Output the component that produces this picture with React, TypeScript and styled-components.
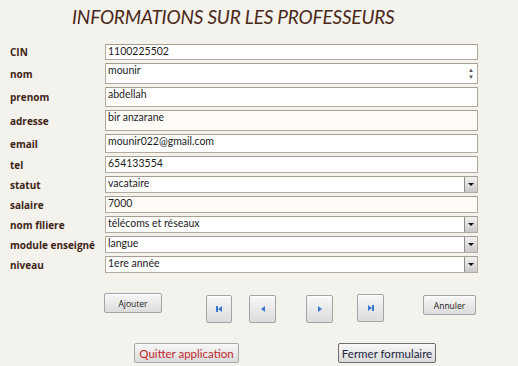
import { Fragment } from "react";
import styled, { createGlobalStyle } from "styled-components";

const GlobalStyle = createGlobalStyle`
  html, body {
    margin: 0;
    padding: 0;
    background: #f4f2ec;
  }
`;

const Page = styled.div`
  width: 518px;
  height: 366px;
  background: #f4f2ec;
  font-family: "Lato", "Open Sans", sans-serif;
  overflow: hidden;
`;

const Title = styled.h1`
  margin: 0;
  padding: 5px 0 0 72px;
  height: 40px;
  box-sizing: border-box;
  font-family: "Lato", sans-serif;
  font-style: italic;
  font-weight: 400;
  font-size: 19px;
  letter-spacing: -0.2px;
  color: #4a2818;
`;

const Form = styled.div`
  display: grid;
  grid-template-columns: 95px 373px;
  row-gap: 3px;
  padding: 4px 0 0 10px;
`;

const Label = styled.div`
  display: flex;
  align-items: center;
  font-family: "Open Sans", sans-serif;
  font-weight: 700;
  font-size: 10px;
  color: #3e2416;
`;

const Field = styled.div<{ $h: number; $tint?: boolean }>`
  position: relative;
  height: ${(p) => p.$h}px;
  box-sizing: border-box;
  border: 1px solid #b3aa9c;
  border-top-color: #a79d8e;
  background: ${(p) => (p.$tint ? "#fffcf8" : "#ffffff")};
  font-family: "Lato", sans-serif;
  font-size: 10.5px;
  color: #1c1c1c;
  padding: 0 0 0 2px;
  line-height: 13px;
`;

const DropButton = styled.div`
  position: absolute;
  right: 0;
  top: 0;
  bottom: 0;
  width: 12px;
  border-left: 1px solid #8e8e8e;
  background: linear-gradient(#f2f2f2, #c9c9c9);
  display: flex;
  align-items: center;
  justify-content: center;

  &::after {
    content: "";
    border-left: 3px solid transparent;
    border-right: 3px solid transparent;
    border-top: 3px solid #111;
  }
`;

const Spinner = styled.div`
  position: absolute;
  right: 2px;
  top: 2px;
  bottom: 2px;
  width: 8px;
  display: flex;
  flex-direction: column;
  justify-content: space-around;
  align-items: center;
  font-size: 6px;
  line-height: 6px;
  color: #555;
`;

const ButtonRow = styled.div`
  display: flex;
  align-items: flex-start;
  padding: 20px 0 0 104px;
  height: 50px;
  box-sizing: border-box;
`;

const Push = styled.button<{ $w: number; $h: number; $ml: number; $mt?: number }>`
  width: ${(p) => p.$w}px;
  height: ${(p) => p.$h}px;
  margin: ${(p) => p.$mt ?? 0}px 0 0 ${(p) => p.$ml}px;
  padding: 0;
  border: 1px solid #a4a4a4;
  border-radius: 2px;
  background: linear-gradient(#f7f7f7, #dcdcdc);
  box-shadow: inset 0 1px 0 #ffffff;
  font-family: "Open Sans", sans-serif;
  font-size: 8.5px;
  color: #222;
  display: flex;
  align-items: center;
  justify-content: center;
`;

const BottomRow = styled.div`
  display: flex;
  padding: 20px 0 0 134px;
`;

const BigButton = styled.button<{ $w: number; $ml: number; $color: string; $dark?: boolean }>`
  width: ${(p) => p.$w}px;
  height: 20px;
  margin-left: ${(p) => p.$ml}px;
  padding: 0;
  border: 1px solid ${(p) => (p.$dark ? "#6d6d6d" : "#a8a8a8")};
  border-radius: 2px;
  background: linear-gradient(#f8f8f8, #dadada);
  font-family: "Lato", sans-serif;
  font-size: 11.5px;
  color: ${(p) => p.$color};
`;

const NavIcon = ({ kind }: { kind: "first" | "prev" | "next" | "last" }) => (
  <svg width="10" height="10" viewBox="0 0 10 10">
    {kind === "first" && (
      <>
        <rect x="2" y="2" width="2" height="6" fill="#3a78d0" />
        <path d="M8 2 L4 5 L8 8 Z" fill="#3a78d0" />
      </>
    )}
    {kind === "prev" && <path d="M7 2 L3 5 L7 8 Z" fill="#3a78d0" />}
    {kind === "next" && <path d="M3 2 L7 5 L3 8 Z" fill="#3a78d0" />}
    {kind === "last" && (
      <>
        <path d="M2 2 L6 5 L2 8 Z" fill="#3a78d0" />
        <rect x="6" y="2" width="2" height="6" fill="#3a78d0" />
      </>
    )}
  </svg>
);

type Row = { label: string; value: string; h: number; kind?: "drop" | "spin"; tint?: boolean };

const rows: Row[] = [
  { label: "CIN", value: "1100225502", h: 16 },
  { label: "nom", value: "mounir", h: 21, kind: "spin" },
  { label: "prenom", value: "abdellah", h: 20 },
  { label: "adresse", value: "bir anzarane", h: 21, tint: true },
  { label: "email", value: "mounir022@gmail.com", h: 19 },
  { label: "tel", value: "654133554", h: 17 },
  { label: "statut", value: "vacataire", h: 17, kind: "drop" },
  { label: "salaire", value: "7000", h: 17, tint: true },
  { label: "nom filiere", value: "télécoms et réseaux", h: 17, kind: "drop" },
  { label: "module enseigné", value: "langue", h: 17, kind: "drop" },
  { label: "niveau", value: "1ere année", h: 17, kind: "drop" },
];

export default function App() {
  return (
    <Page>
      <GlobalStyle />
      <Title>INFORMATIONS SUR LES PROFESSEURS</Title>
      <Form>
        {rows.map((r) => (
          <Fragment key={r.label}>
            <Label>{r.label}</Label>
            <Field $h={r.h} $tint={r.tint}>
              {r.value}
              {r.kind === "drop" && <DropButton />}
              {r.kind === "spin" && (
                <Spinner>
                  <span>▲</span>
                  <span>▼</span>
                </Spinner>
              )}
            </Field>
          </Fragment>
        ))}
      </Form>
      <ButtonRow>
        <Push $w={58} $h={20} $ml={0}>Ajouter</Push>
        <Push $w={26} $h={28} $ml={44} $mt={2}><NavIcon kind="first" /></Push>
        <Push $w={27} $h={28} $ml={17} $mt={2}><NavIcon kind="prev" /></Push>
        <Push $w={27} $h={28} $ml={30} $mt={2}><NavIcon kind="next" /></Push>
        <Push $w={27} $h={28} $ml={24} $mt={1}><NavIcon kind="last" /></Push>
        <Push $w={53} $h={20} $ml={39} $mt={2}>Annuler</Push>
      </ButtonRow>
      <BottomRow>
        <BigButton $w={105} $ml={0} $color="#c0282c">Quitter application</BigButton>
        <BigButton $w={98} $ml={99} $color="#1d2540" $dark>Fermer formulaire</BigButton>
      </BottomRow>
    </Page>
  );
}
